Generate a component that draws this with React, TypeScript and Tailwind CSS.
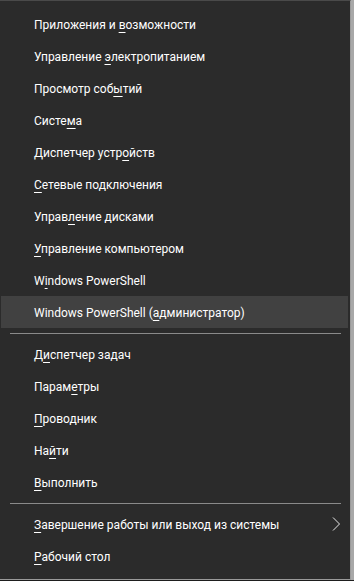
import React from 'react';

type Item = { pre: string; key: string; post: string; sub?: boolean; active?: boolean };

const groups: Item[][] = [
  [
    { pre: 'Приложения и ', key: 'в', post: 'озможности' },
    { pre: 'Управление ', key: 'э', post: 'лектропитанием' },
    { pre: 'Просмотр соб', key: 'ы', post: 'тий' },
    { pre: 'Систе', key: 'м', post: 'а' },
    { pre: 'Диспетчер устр', key: 'о', post: 'йств' },
    { pre: '', key: 'С', post: 'етевые подключения' },
    { pre: 'Управ', key: 'л', post: 'ение дисками' },
    { pre: '', key: 'У', post: 'правление компьютером' },
    { pre: 'W', key: 'i', post: 'ndows PowerShell' },
    { pre: 'Windows PowerShell (', key: 'а', post: 'дминистратор)', active: true },
  ],
  [
    { pre: 'Д', key: 'и', post: 'спетчер задач' },
    { pre: 'Парам', key: 'е', post: 'тры' },
    { pre: '', key: 'П', post: 'роводник' },
    { pre: 'На', key: 'й', post: 'ти' },
    { pre: '', key: 'В', post: 'ыполнить' },
  ],
  [
    { pre: '', key: 'З', post: 'авершение работы или выход из системы', sub: true },
    { pre: '', key: 'Р', post: 'абочий стол' },
  ],
];

function Chevron() {
  return (
    <svg width="9" height="14" viewBox="0 0 9 14" className="absolute left-[331px] top-[9px]">
      <polyline points="1,0.5 7.5,7 1,13.5" fill="none" stroke="#e8e8e8" strokeWidth="1" />
    </svg>
  );
}

function Row({ item }: { item: Item }) {
  return (
    <div
      className={`relative h-8 mx-[1px] w-[347px] pl-[33px] leading-8 text-[12px] text-white whitespace-nowrap ${
        item.active ? 'bg-[#414141]' : ''
      }`}
    >
      <span className="relative top-[1px]">
        {item.pre}
        <span className="underline underline-offset-[3px] decoration-1">{item.key}</span>
        {item.post}
      </span>
      {item.sub && <Chevron />}
    </div>
  );
}

export default function App() {
  return (
    <div className="w-[354px] h-[581px] bg-[#1e1e1e] flex overflow-hidden">
      <div
        className="w-[351px] h-[580px] shrink-0 bg-[#2b2b2b] border-t border-r border-b border-t-[#4a4a4a] border-r-[#9a9a9a] border-b-[#9a9a9a] pt-[7px]"
        style={{ fontFamily: 'Roboto, "Noto Sans", sans-serif' }}
      >
        {groups.map((g, gi) => (
          <div key={gi}>
            {gi > 0 && (
              <div className="h-[10px] flex items-center pl-[10px]">
                <div className="w-[331px] h-px bg-[#8a8a8a]" />
              </div>
            )}
            {g.map((item, i) => (
              <Row key={i} item={item} />
            ))}
          </div>
        ))}
      </div>
      <div className="w-[3px] h-[580px] bg-[#a8a8a8]" />
    </div>
  );
}
